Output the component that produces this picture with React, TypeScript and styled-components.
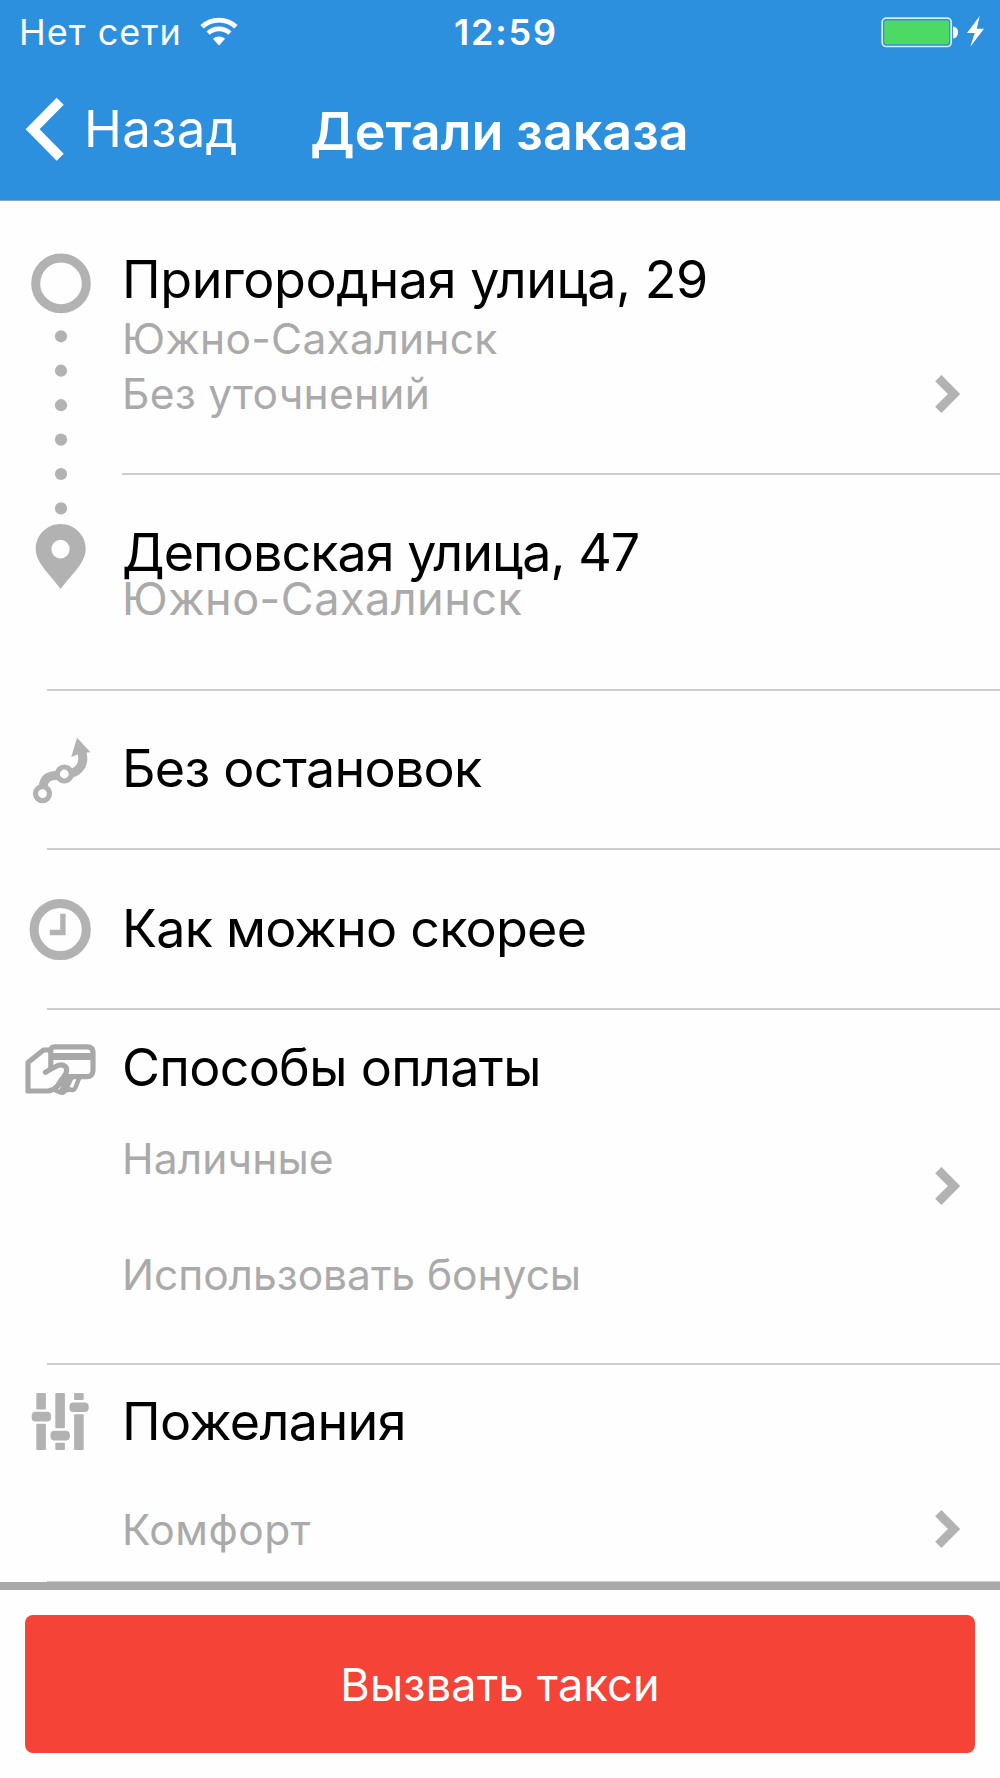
import React from "react";
import styled, { createGlobalStyle } from "styled-components";

const GlobalStyle = createGlobalStyle`
  *, *::before, *::after { box-sizing: border-box; }
  body {
    margin: 0;
    background: #fefefe;
    font-family: "Inter", "Roboto", "Liberation Sans", sans-serif;
  }
`;

const GREY = "#b2b2b2";

const Screen = styled.div`
  width: 1000px;
  height: 1778px;
  display: flex;
  flex-direction: column;
  background: #fefefe;
  overflow: hidden;
`;

const Header = styled.header`
  height: 201px;
  flex: none;
  background: #2d90df;
  border-bottom: 1px solid #8aa7c0;
  color: #fff;
`;

const StatusBar = styled.div`
  display: grid;
  grid-template-columns: 1fr auto 1fr;
  align-items: start;
  height: 80px;
  padding: 10px 15px 0 19px;
`;

const StatusSide = styled.div<{ $end?: boolean }>`
  display: flex;
  align-items: flex-start;
  justify-content: ${(p) => (p.$end ? "flex-end" : "flex-start")};
`;

const StatusText = styled.span<{ $bold?: boolean }>`
  font-size: 36px;
  line-height: 44px;
  font-weight: ${(p) => (p.$bold ? 600 : 400)};
  letter-spacing: ${(p) => (p.$bold ? "1.8px" : "1px")};
  padding-left: ${(p) => (p.$bold ? "8px" : "0")};
  white-space: nowrap;
`;

const WifiIcon = styled.svg`
  display: block;
  width: 40px;
  height: 32px;
  margin: 5px 0 0 17px;
`;

const BatteryIcon = styled.svg`
  display: block;
  width: 105px;
  height: 34px;
  margin-top: 5px;
`;

const NavBar = styled.div`
  display: grid;
  grid-template-columns: 1fr auto 1fr;
  align-items: start;
  height: 120px;
  padding: 15px 25px 0 24px;
`;

const BackButton = styled.button`
  display: flex;
  align-items: flex-start;
  margin: 0;
  padding: 0;
  border: 0;
  background: none;
  color: inherit;
  font: inherit;
  cursor: pointer;
`;

const BackArrow = styled.svg`
  display: block;
  width: 42px;
  height: 66px;
  margin-top: 1px;
`;

const BackLabel = styled.span`
  margin: 3px 0 0 18px;
  font-size: 51px;
  line-height: 61px;
  letter-spacing: 0.3px;
`;

const PageTitle = styled.h1`
  margin: 5px 0 0;
  font-size: 52px;
  line-height: 63px;
  font-weight: 600;
  white-space: nowrap;
`;

const Content = styled.main`
  height: 1381px;
  flex: none;
`;

const RouteSection = styled.section`
  display: grid;
  grid-template-columns: 122px 1fr;
  height: 488px;
`;

const Stop = styled.div<{ $height: number; $top: number }>`
  display: flex;
  justify-content: space-between;
  height: ${(p) => p.$height}px;
  padding-top: ${(p) => p.$top}px;
`;

const Row = styled.section<{ $height: number; $top: number }>`
  display: grid;
  grid-template-columns: 122px 1fr auto;
  align-items: start;
  height: ${(p) => p.$height}px;
  padding-top: ${(p) => p.$top}px;
`;

const Divider = styled.hr<{ $inset: number }>`
  height: 2px;
  margin: 0 0 0 ${(p) => p.$inset}px;
  border: 0;
  background: #cdcdd0;
`;

const Lines = styled.div`
  display: flex;
  flex-direction: column;
  align-items: flex-start;
`;

const Primary = styled.div<{ $track: number }>`
  font-size: 52px;
  line-height: 63px;
  letter-spacing: ${(p) => p.$track}px;
  color: #000;
  white-space: nowrap;
`;

const Secondary = styled.div<{ $track?: number; $gap: number; $large?: boolean }>`
  margin-top: ${(p) => p.$gap}px;
  font-size: ${(p) => (p.$large ? 45 : 42.5)}px;
  line-height: ${(p) => (p.$large ? 55 : 51)}px;
  letter-spacing: ${(p) => p.$track ?? 0}px;
  color: #aaaaaa;
  white-space: nowrap;
`;

const IconBox = styled.svg<{ $h: number; $offset?: number }>`
  display: block;
  width: 122px;
  height: ${(p) => p.$h}px;
  margin-top: ${(p) => p.$offset ?? 0}px;
`;

const ChevronIcon = styled.svg<{ $offset: number }>`
  display: block;
  width: 30px;
  height: 40px;
  margin: ${(p) => p.$offset}px 38px 0 0;
`;

const Footer = styled.footer`
  flex: 1;
  border-top: 8px solid #a9a9a9;
  padding: 25px 25px 0;
`;

const OrderButton = styled.button`
  display: block;
  width: 950px;
  height: 138px;
  margin: 0;
  padding: 1px 0 0;
  border: 0;
  border-radius: 8px;
  background: #f54337;
  color: #fff;
  font-family: inherit;
  font-size: 45px;
  line-height: 55px;
  letter-spacing: 0.2px;
  cursor: pointer;
`;

function Chevron({ offset }: { offset: number }) {
  return (
    <ChevronIcon $offset={offset} viewBox="932 373.7 30 40">
      <path d="M938.3 377.9 954 393.7 938.3 409.5" fill="none" stroke={GREY} strokeWidth="8.8" />
    </ChevronIcon>
  );
}

function RouteRail() {
  return (
    <IconBox $h={488} viewBox="0 201 122 488">
      <circle cx="61" cy="283.4" r="25.3" fill="none" stroke={GREY} strokeWidth="9" />
      {[336.3, 370.7, 405.2, 439.6, 474, 508.4].map((y) => (
        <circle key={y} cx="61" cy={y} r="6.1" fill={GREY} />
      ))}
      <path
        fillRule="evenodd"
        fill={GREY}
        d="M60.7 524C46.9 524 35.7 535 35.7 548.8C35.7 563 50 574.5 60.7 589C71.4 574.5 85.7 563 85.7 548.8C85.7 535 74.5 524 60.7 524ZM60.5 539.8A9.1 9.3 0 1 1 60.5 558.4A9.1 9.3 0 1 1 60.5 539.8Z"
      />
    </IconBox>
  );
}

function StopsIcon() {
  return (
    <IconBox $h={70} $offset={-2} viewBox="0 735 122 70">
      <g fill="none" stroke={GREY}>
        <circle cx="42.5" cy="793.6" r="7" strokeWidth="5.2" />
        <circle cx="64.3" cy="774" r="7" strokeWidth="5.2" />
        <path d="M43.3 787C43.5 778 49 775.5 57.5 775.2" strokeWidth="9" />
        <path d="M71 773.5C80 771 85 763 81.8 752" strokeWidth="9" />
      </g>
      <path d="M77 737.8 90.5 752.2 84 752.8 77.5 754.5 71.3 757Z" fill={GREY} />
    </IconBox>
  );
}

function ClockIcon() {
  return (
    <IconBox $h={64} viewBox="0 897 122 64">
      <circle cx="60.2" cy="929.5" r="26.1" fill="none" stroke={GREY} strokeWidth="9" />
      <path d="M60.2 913.8H65.6V935.3H49.8V929.8H60.2Z" fill={GREY} />
    </IconBox>
  );
}

function PaymentIcon() {
  return (
    <IconBox $h={60} viewBox="0 1036 122 60">
      <g fill="none" stroke="#a8a8a8" strokeWidth="5.2" strokeLinejoin="round" strokeLinecap="round">
        <path d="M50 1050H43.5L28 1062.5V1091H48C57 1090 62 1082 66 1073C68.5 1067 63.5 1063.8 58.5 1065.2L51 1069 45.5 1072.3" />
        <path d="M50.8 1068.5V1051C50.8 1048 52 1046.8 54.5 1046.8H87C91 1046.8 93 1049 93 1052.5V1070.500C93 1074.5 90.500 1076.600 87 1076.600H64" />
        <path d="M52.5 1056.4H92" strokeWidth="7" strokeLinecap="butt" />
        <path d="M61.5 1079 54.5 1090 60.5 1092.500 66.500 1079M60.500 1091.500C62 1094 64.500 1092.500 65.500 1090L71 1079M70 1089.500C72 1090.500 74.500 1090 75.500 1087.500L79 1078.500" strokeWidth="4.400" />
        <path d="M65 1090.500 70 1089.500" strokeWidth="4.400" />
      </g>
    </IconBox>
  );
}

function SlidersIcon() {
  return (
    <IconBox $h={64} viewBox="0 1390 122 64">
      <g fill={GREY}>
        <rect x="36.3" y="1393" width="9.6" height="16.5" rx="1" />
        <rect x="31.7" y="1411.7" width="19.3" height="9.7" rx="4" />
        <rect x="36.3" y="1423.7" width="9.6" height="26.2" rx="1" />
        <rect x="55.3" y="1393" width="9.6" height="35.3" rx="1" />
        <rect x="50.5" y="1430.7" width="19.3" height="9.7" rx="4" />
        <rect x="55.3" y="1442.7" width="9.6" height="7.2" rx="1" />
        <rect x="74.1" y="1393" width="9.6" height="7" rx="1" />
        <rect x="69.4" y="1402.4" width="19.3" height="9.7" rx="4" />
        <rect x="74.1" y="1414.3" width="9.6" height="35.6" rx="1" />
      </g>
    </IconBox>
  );
}

export default function App() {
  return (
    <>
      <GlobalStyle />
      <Screen>
        <Header>
          <StatusBar>
            <StatusSide>
              <StatusText>Нет сети</StatusText>
              <WifiIcon viewBox="199.6 15 40 32">
                <g fill="none" stroke="#fff">
                  <path d="M202.7 26.7A24.8 24.8 0 0 1 236.5 26.7" strokeWidth="4.8" />
                  <path d="M208.7 33.2A15.8 15.8 0 0 1 230.5 33.2" strokeWidth="4.6" />
                </g>
                <path d="M219.6 45.5 213.5 38.8A9 9 0 0 1 225.7 38.8Z" fill="#fff" />
              </WifiIcon>
            </StatusSide>
            <StatusText $bold>12:59</StatusText>
            <StatusSide $end>
              <BatteryIcon viewBox="880 15 105 34">
                <rect x="882.2" y="18.2" width="69" height="28.3" rx="4" fill="none" stroke="#d9eafa" strokeWidth="1.7" />
                <rect x="884.3" y="20.4" width="64.8" height="23.9" rx="2" fill="#4cd964" />
                <path d="M953 26.6C956.5 27 958 29.5 958 32.5S956.5 38 953 38.4Z" fill="#fff" />
                <path d="M979.7 16 967 33H974.7L970.3 46.7 984 28.7H976.8Z" fill="#fff" />
              </BatteryIcon>
            </StatusSide>
          </StatusBar>
          <NavBar>
            <BackButton>
              <BackArrow viewBox="24 96 42 66">
                <path d="M60.2 101.2 32.6 129.2 60.2 157.2" fill="none" stroke="#fff" strokeWidth="9.9" />
              </BackArrow>
              <BackLabel>Назад</BackLabel>
            </BackButton>
            <PageTitle>Детали заказа</PageTitle>
          </NavBar>
        </Header>

        <Content>
          <RouteSection>
            <RouteRail />
            <div>
              <Stop $height={272} $top={47}>
                <Lines>
                  <Primary $track={-0.42}>Пригородная улица, 29</Primary>
                  <Secondary $gap={2} $track={0.28}>Южно-Сахалинск</Secondary>
                  <Secondary $gap={4} $track={0.28}>Без уточнений</Secondary>
                </Lines>
                <Chevron offset={126} />
              </Stop>
              <Divider $inset={0} />
              <Stop $height={214} $top={46}>
                <Lines>
                  <Primary $track={-0.93}>Деповская улица, 47</Primary>
                  <Secondary $large $gap={-13} $track={0.48}>Южно-Сахалинск</Secondary>
                </Lines>
              </Stop>
            </div>
          </RouteSection>
          <Divider $inset={47} />

          <Row $height={157} $top={46}>
            <StopsIcon />
            <Primary $track={-0.75}>Без остановок</Primary>
          </Row>
          <Divider $inset={47} />

          <Row $height={158} $top={47}>
            <ClockIcon />
            <Primary $track={-0.74}>Как можно скорее</Primary>
          </Row>
          <Divider $inset={47} />

          <Row $height={353} $top={26}>
            <PaymentIcon />
            <Lines>
              <Primary $track={-0.7}>Способы оплаты</Primary>
              <Secondary $gap={34} $track={0.12}>Наличные</Secondary>
              <Secondary $gap={65} $track={-0.04}>Использовать бонусы</Secondary>
            </Lines>
            <Chevron offset={130} />
          </Row>
          <Divider $inset={47} />

          <Row $height={216} $top={25}>
            <SlidersIcon />
            <Lines>
              <Primary $track={-0.6}>Пожелания</Primary>
              <Secondary $gap={51} $track={0.45}>Комфорт</Secondary>
            </Lines>
            <Chevron offset={119} />
          </Row>
          <Divider $inset={47} />
        </Content>

        <Footer>
          <OrderButton>Вызвать такси</OrderButton>
        </Footer>
      </Screen>
    </>
  );
}
